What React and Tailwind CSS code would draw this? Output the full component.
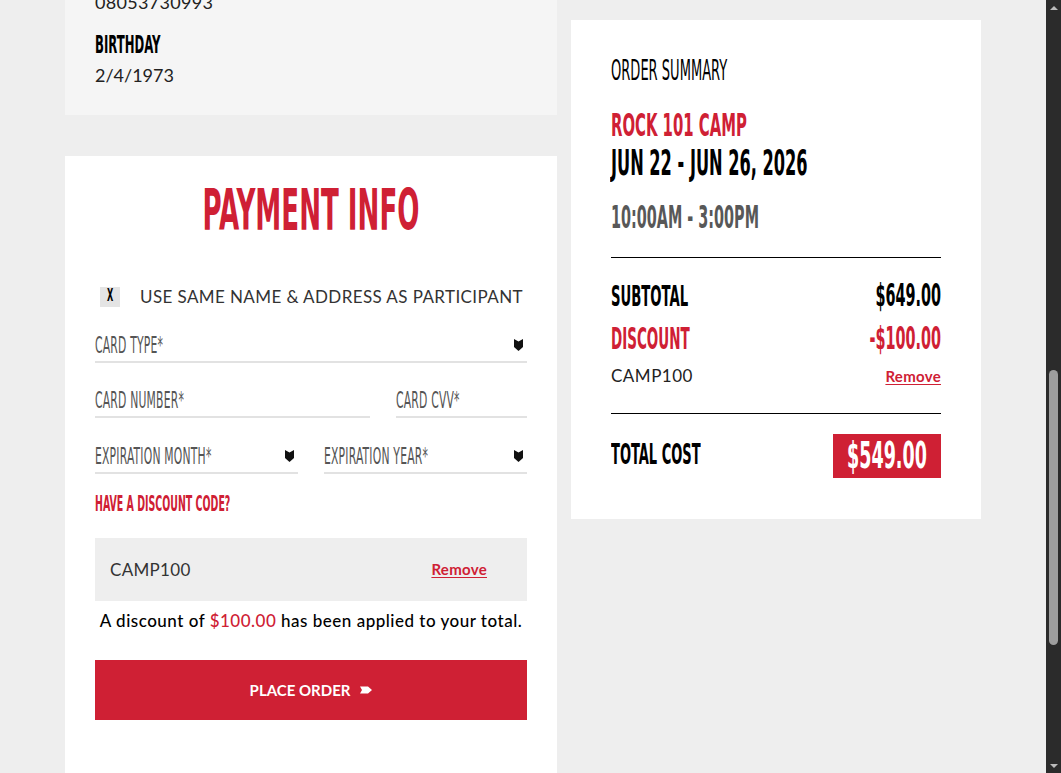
import React from "react";

// tall condensed display type: narrow face, stretched vertically
const cond = "inline-block origin-center scale-y-[1.95] font-['Liberation_Sans_Narrow','Arial_Narrow','DejaVu_Sans_Condensed',sans-serif]";

const Chevron = () => (
  <svg width="9" height="12" viewBox="0 0 9 12" className="shrink-0">
    <path d="M0 0 L4.5 2.5 L9 0 L9 8 L4.5 12 L0 8 Z" fill="#111" />
  </svg>
);

const Field = ({ label, select, className = "" }) => (
  <div className={"flex items-center justify-between border-b-2 border-[#e2e2e2] h-[35px] " + className}>
    <span className={cond + " text-[12px] text-[#555] tracking-[0.2px]"}>{label}</span>
    {select && <Chevron />}
  </div>
);

const PaymentCard = () => (
  <div className="bg-white px-[30px] pt-[26px] pb-[60px]">
    <h2 className="text-center text-[#cf2034] font-bold text-[29px] leading-[56px] h-[56px]">
      <span className={cond}>PAYMENT INFO</span>
    </h2>

    <div className="flex items-center gap-[20px] mt-[46px] pl-[5px] h-[26px]">
      <div className="w-[20px] h-[20px] bg-[#e4e4e4] flex items-center justify-center">
        <span className={cond + " text-[9px] font-bold text-black"}>X</span>
      </div>
      <span className="font-['Lato',sans-serif] text-[17px] text-[#333] tracking-[0.4px]">
        USE SAME NAME &amp; ADDRESS AS PARTICIPANT
      </span>
    </div>

    <Field label="CARD TYPE*" select className="mt-[18px] pr-[4px]" />
    <div className="flex gap-[26px] mt-[20px]">
      <Field label="CARD NUMBER*" className="w-[275px]" />
      <Field label="CARD CVV*" className="flex-1" />
    </div>
    <div className="flex gap-[26px] mt-[21px]">
      <Field label="EXPIRATION MONTH*" select className="flex-1 pr-[4px]" />
      <Field label="EXPIRATION YEAR*" select className="flex-1 pr-[4px]" />
    </div>

    <div className="mt-[19px] h-[24px] flex items-center">
      <span className={cond + " text-[10.5px] font-bold text-[#cf2034]"}>HAVE A DISCOUNT CODE?</span>
    </div>

    <div className="mt-[21px] h-[63px] bg-[#eeeeee] flex items-center justify-between pl-[15px] pr-[40px] font-['Lato',sans-serif]">
      <span className="text-[17px] text-[#333] tracking-[0.3px]">CAMP100</span>
      <span className="text-[15px] font-bold text-[#cf2034] underline underline-offset-2 tracking-[0.3px]">Remove</span>
    </div>

    <p className="mt-[7px] leading-[26px] text-center font-['Lato',sans-serif] text-[17px] font-medium text-black tracking-[0.5px]">
      A discount of <span className="text-[#cf2034]">$100.00</span> has been applied to your total.
    </p>

    <button className="mt-[26px] w-full h-[60px] bg-[#cf2034] flex items-center justify-center gap-[10px] text-white font-['Lato',sans-serif] font-bold text-[15px]">
      PLACE ORDER
      <svg width="12" height="8" viewBox="0 0 12 8">
        <path d="M0 0.5 L8 0.5 L12 4 L8 7.5 L0 7.5 L2 4 Z" fill="#fff" />
      </svg>
    </button>
  </div>
);

const SummaryCard = () => (
  <div className="bg-white px-[40px] pt-[40px] pb-[41px]">
    <div className="h-[24px] flex items-center">
      <span className={cond + " text-[14.5px] text-black"}>ORDER SUMMARY</span>
    </div>
    <div className="mt-[28px] h-[30px] flex items-center">
      <span className={cond + " text-[16.5px] font-bold text-[#cf2034]"}>ROCK 101 CAMP</span>
    </div>
    <div className="mt-[2px] h-[36px] flex items-center">
      <span className={cond + " text-[18px] font-bold text-black"}>JUN 22 - JUN 26, 2026</span>
    </div>
    <div className="mt-[23px] h-[30px] flex items-center">
      <span className={cond + " text-[16px] font-bold text-[#585858]"}>10:00AM - 3:00PM</span>
    </div>

    <div className="mt-[24px] border-t border-black" />

    <div className="mt-[23px] h-[30px] flex items-center justify-between">
      <span className={cond + " text-[14.7px] font-bold text-black"}>SUBTOTAL</span>
      <span className={cond + " text-[16px] font-bold text-black"}>$649.00</span>
    </div>
    <div className="mt-[13px] h-[30px] flex items-center justify-between">
      <span className={cond + " text-[15px] font-bold text-[#cf2034]"}>DISCOUNT</span>
      <span className={cond + " text-[16px] font-bold text-[#cf2034]"}>-$100.00</span>
    </div>
    <div className="mt-[12px] h-[20px] flex items-center justify-between font-['Lato',sans-serif]">
      <span className="text-[17px] text-[#222] tracking-[0.5px]">CAMP100</span>
      <span className="text-[15px] font-bold text-[#cf2034] underline underline-offset-2 tracking-[0.3px]">Remove</span>
    </div>

    <div className="mt-[27px] border-t border-black" />

    <div className="mt-[20px] flex items-center justify-between">
      <span className={cond + " text-[14.5px] font-bold text-black"}>TOTAL COST</span>
      <div className="w-[108px] h-[44px] bg-[#cf2034] flex items-center justify-center">
        <span className={cond + " text-[19.5px] font-bold text-white"}>$549.00</span>
      </div>
    </div>
  </div>
);

const Scrollbar = () => (
  <div className="w-[15px] bg-[#2b2b2b] flex flex-col items-center">
    <div className="h-[14px] flex items-center justify-center">
      <svg width="8" height="5" viewBox="0 0 8 5"><path d="M0 5 L4 1 L8 5 Z" fill="#bbb" /></svg>
    </div>
    <div className="mt-[356px] w-[9px] h-[275px] rounded-full bg-[#9e9e9e]" />
    <div className="flex-1" />
    <div className="h-[14px] flex items-center justify-center">
      <svg width="8" height="5" viewBox="0 0 8 5"><path d="M0 0 L4 4 L8 0 Z" fill="#bbb" /></svg>
    </div>
  </div>
);

export default function App() {
  return (
    <div className="flex h-[773px] overflow-hidden bg-[#eeeeee]">
      <div className="flex-1 overflow-hidden">
        <div className="flex items-start gap-[14px] pl-[65px]">
          <div className="w-[492px] flex flex-col">
            {/* participant details, scrolled mostly out of view */}
            <div className="bg-[#f5f5f5] px-[30px] pb-[27px] -mt-[11px] font-['Lato',sans-serif]">
              <p className="text-[18px] leading-[26px] text-[#222] tracking-[0.3px]">08053730993</p>
              <div className="mt-[18px] h-[24px] flex items-center">
                <span className={cond + " text-[13px] font-bold text-black"}>BIRTHDAY</span>
              </div>
              <p className="mt-[5px] text-[18px] leading-[26px] text-[#222]">2/4/1973</p>
            </div>
            <div className="mt-[41px]">
              <PaymentCard />
            </div>
          </div>
          <div className="w-[410px] mt-[20px]">
            <SummaryCard />
          </div>
        </div>
      </div>
      <Scrollbar />
    </div>
  );
}
